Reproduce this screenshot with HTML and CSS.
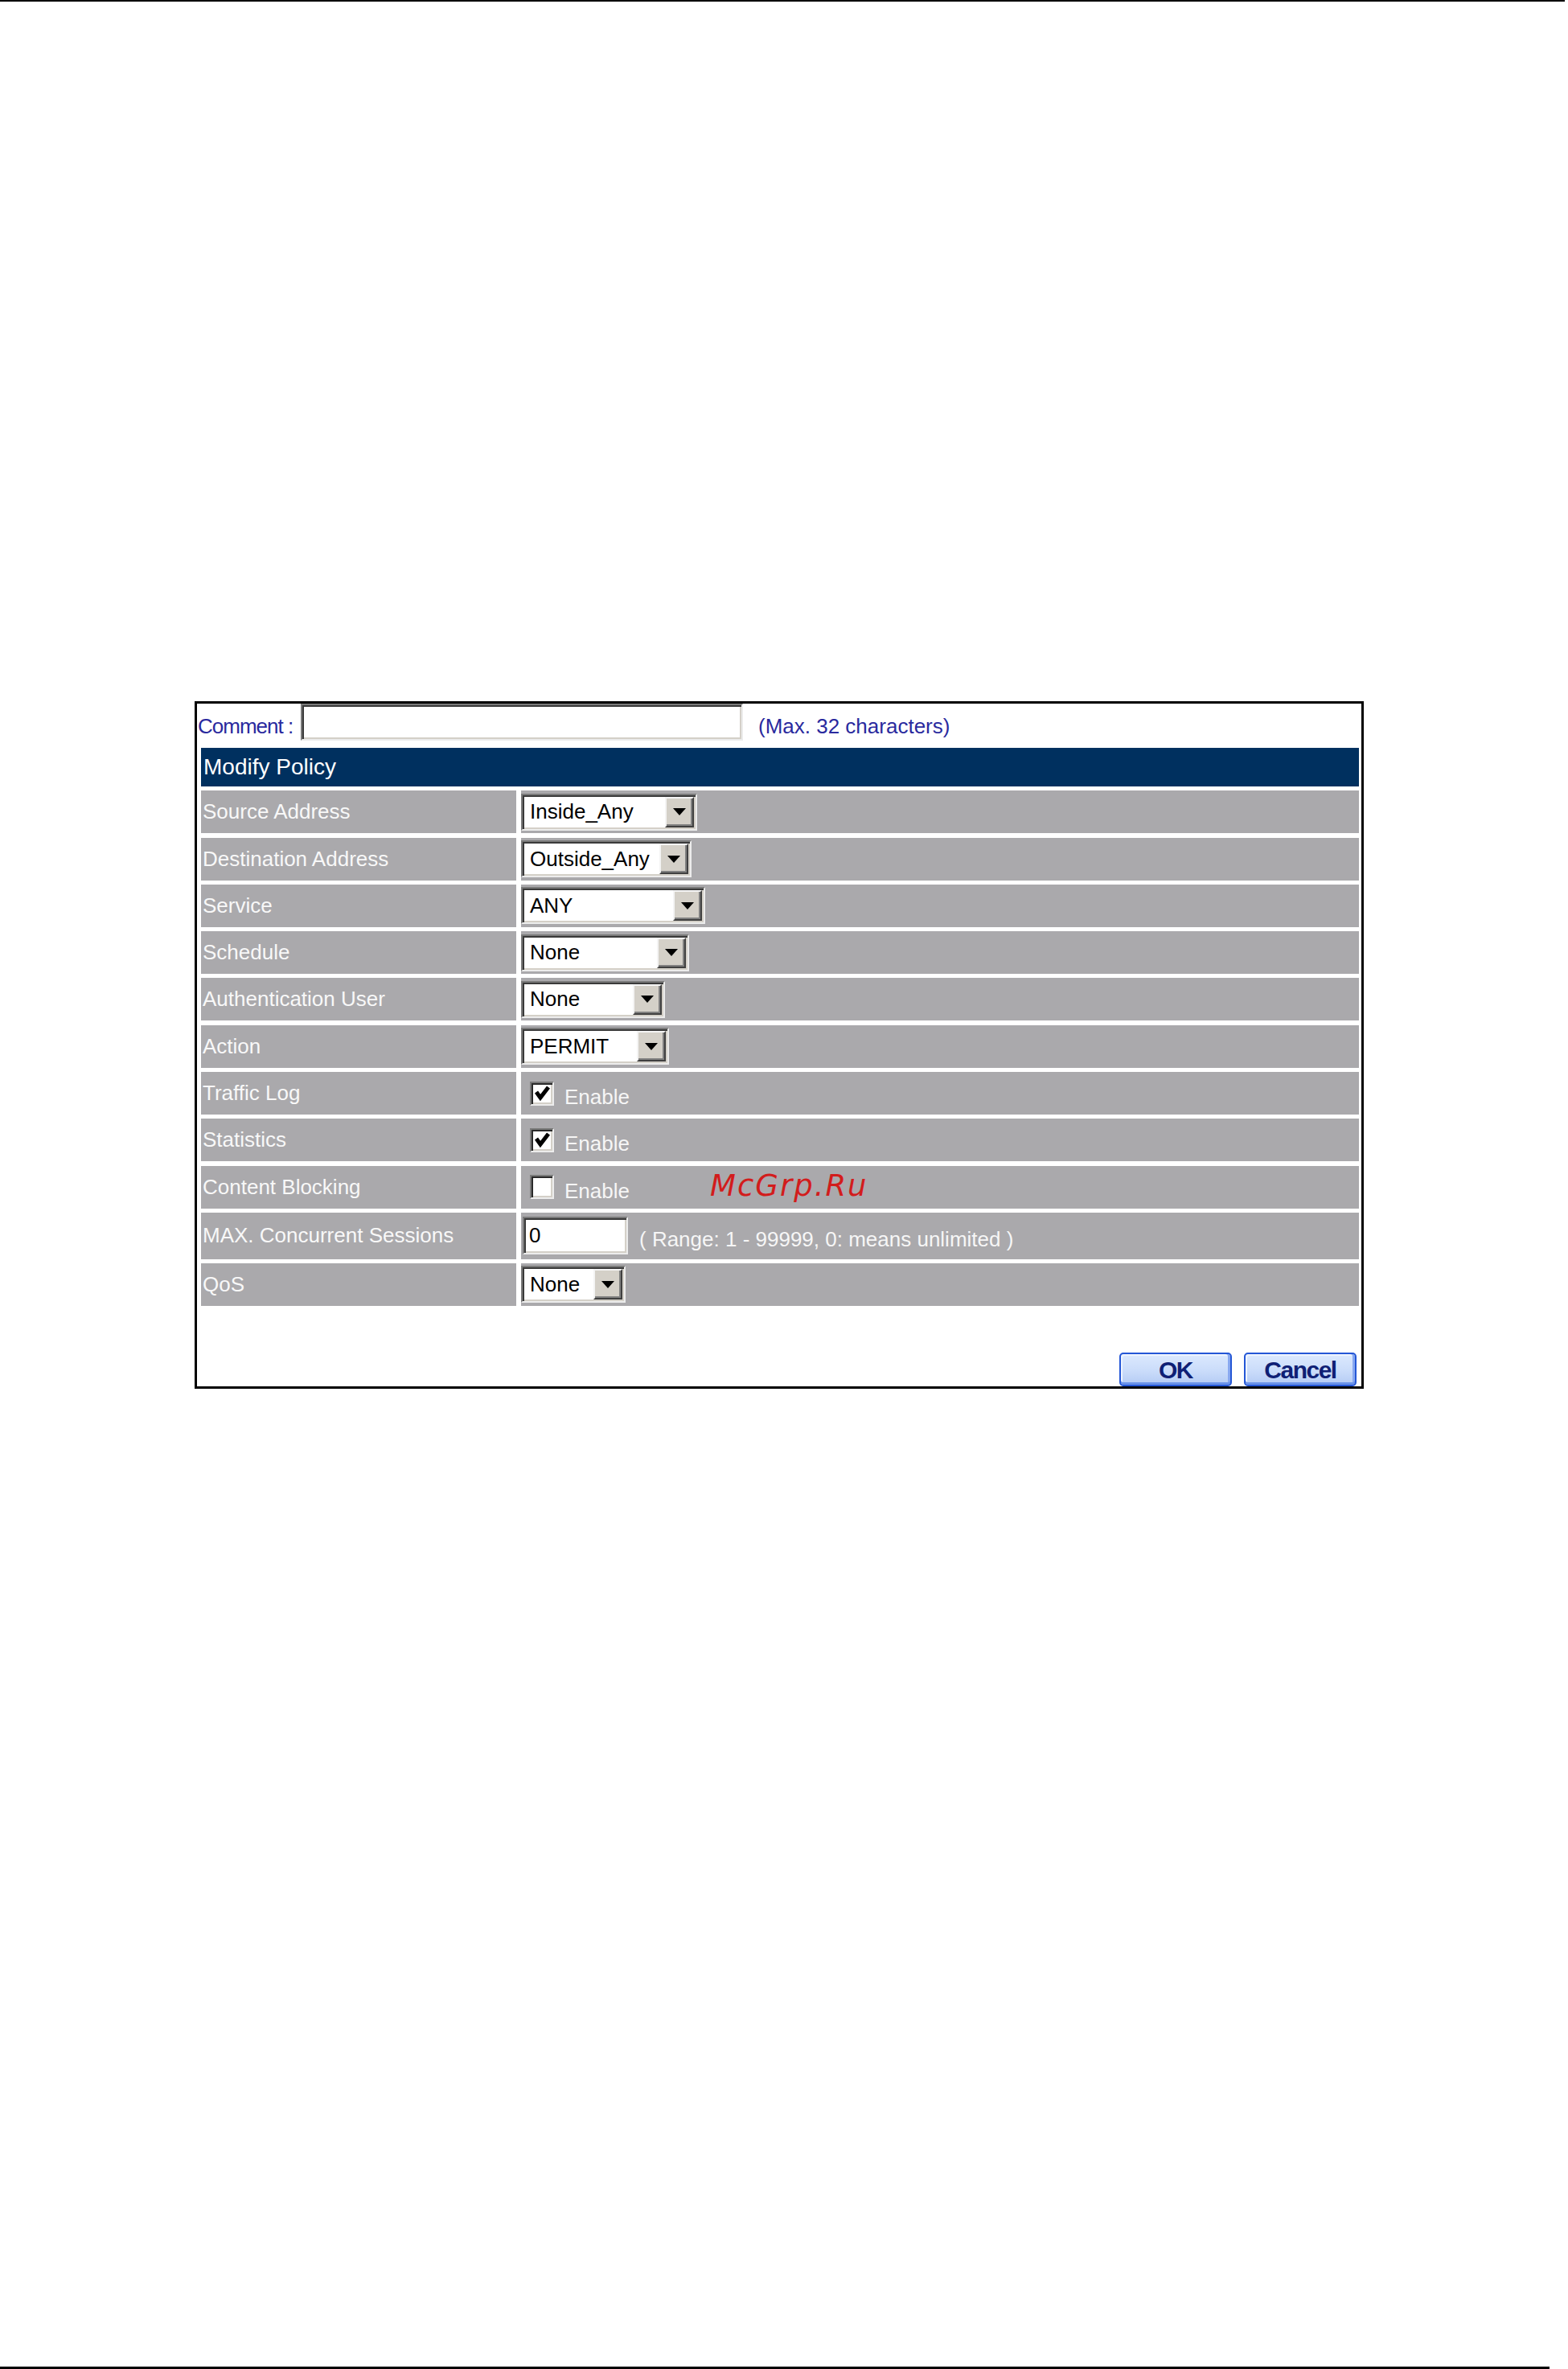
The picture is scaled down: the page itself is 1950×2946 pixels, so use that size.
FILE: index.html
```html
<!DOCTYPE html>
<html>
<head>
<meta charset="utf-8">
<title>Modify Policy</title>
<link rel="stylesheet" href="styles.css">
</head>
<body>
<div class="page">
  <div class="rule-top"></div>
  <div class="panel">
    <div class="comment-row">
      <span class="c-label">Comment :</span>
      <span class="textbox tb-comment"></span>
      <span class="c-note">(Max. 32 characters)</span>
    </div>
    <div class="form">
      <div class="head">Modify Policy</div>

      <div class="lbl">Source Address</div>
      <div class="val"><div class="select w-src"><span class="sel-text">Inside_Any</span><span class="dd"></span></div></div>

      <div class="lbl">Destination Address</div>
      <div class="val"><div class="select w-dst"><span class="sel-text">Outside_Any</span><span class="dd"></span></div></div>

      <div class="lbl">Service</div>
      <div class="val"><div class="select w-svc"><span class="sel-text">ANY</span><span class="dd"></span></div></div>

      <div class="lbl">Schedule</div>
      <div class="val"><div class="select w-sch"><span class="sel-text">None</span><span class="dd"></span></div></div>

      <div class="lbl">Authentication User</div>
      <div class="val"><div class="select w-auth"><span class="sel-text">None</span><span class="dd"></span></div></div>

      <div class="lbl">Action</div>
      <div class="val"><div class="select w-act"><span class="sel-text">PERMIT</span><span class="dd"></span></div></div>

      <div class="lbl">Traffic Log</div>
      <div class="val"><span class="cb"><svg viewBox="0 0 26 26" width="26" height="26"><polyline points="6,11 11,18 21,5" fill="none" stroke="#000" stroke-width="5"/></svg></span><span class="enable">Enable</span></div>

      <div class="lbl">Statistics</div>
      <div class="val"><span class="cb"><svg viewBox="0 0 26 26" width="26" height="26"><polyline points="6,11 11,18 21,5" fill="none" stroke="#000" stroke-width="5"/></svg></span><span class="enable">Enable</span></div>

      <div class="lbl">Content Blocking</div>
      <div class="val"><span class="cb"></span><span class="enable">Enable</span></div>

      <div class="lbl">MAX. Concurrent Sessions</div>
      <div class="val"><span class="textbox tb-max">0</span><span class="range">( Range: 1 - 99999, 0: means unlimited )</span></div>

      <div class="lbl">QoS</div>
      <div class="val"><div class="select w-qos"><span class="sel-text">None</span><span class="dd"></span></div></div>
    </div>
    <div class="btns">
      <div class="btn">OK</div>
      <div class="btn">Cancel</div>
    </div>
    <div class="watermark">McGrp.Ru</div>
  </div>
  <div class="rule-bottom"></div>
</div>
</body>
</html>
```
FILE: styles.css
```css
* { box-sizing: border-box; }
html, body { margin: 0; padding: 0; background: #fff; }
body { font-family: "Liberation Sans", Arial, sans-serif; }

.page {
  display: flex;
  flex-direction: column;
  height: 2946px;
  overflow: hidden;
}
.rule-top {
  flex: none;
  height: 2px;
  width: 1946px;
  background: #000;
}
.rule-bottom {
  flex: none;
  height: 3px;
  width: 1927px;
  margin-top: auto;
  background: #000;
}

.panel {
  position: relative;
  flex: none;
  margin: 870px 0 0 242px;
  width: 1454px;
  border: 3px solid #000;
  background: #fff;
}

.comment-row {
  display: flex;
  align-items: center;
  height: 46px;
  margin: 0 0 9px 1px;
  font-size: 26px;
  color: #2a2a9e;
}
.c-label {
  width: 128px;
  padding-top: 10px;
  letter-spacing: -1px;
  white-space: nowrap;
}
.c-note {
  margin-left: 19px;
  padding-top: 10px;
  white-space: nowrap;
}

.textbox {
  display: block;
  background: #fff;
  border: 2px solid;
  border-color: #7a7a7a #ececec #ececec #7a7a7a;
  box-shadow: inset 2px 2px 0 #3a3a3a, inset -2px -2px 0 #d4d0c8;
}
.tb-comment { width: 550px; height: 46px; }
.tb-max {
  display: flex;
  align-items: center;
  width: 131px;
  height: 47px;
  margin-left: 2px;
  padding-left: 6px;
  color: #000;
  font-size: 26px;
}

.form {
  display: grid;
  grid-template-columns: 392px 1fr;
  grid-template-rows: 48px repeat(9, 53px) 57.7px 53px;
  column-gap: 6px;
  row-gap: 5.3px;
  margin: 0 3px 0 5px;
}
.head {
  grid-column: 1 / -1;
  display: flex;
  align-items: center;
  padding-left: 3px;
  background: #00305f;
  color: #fff;
  font-size: 28px;
}
.lbl {
  display: flex;
  align-items: center;
  padding-left: 2px;
  background: #aaa9ac;
  color: #f8f8f8;
  font-size: 26px;
  white-space: nowrap;
}
.val {
  display: flex;
  align-items: center;
  background: #aaa9ac;
  color: #f6f6f6;
  font-size: 26px;
  white-space: nowrap;
}

.select {
  display: flex;
  height: 46px;
  padding: 2px;
  background: #fff;
  border: 2px solid;
  border-color: #7a7a7a #ececec #ececec #7a7a7a;
  box-shadow: inset 2px 2px 0 #3a3a3a, inset -2px -2px 0 #d4d0c8;
  color: #000;
}
.w-src { width: 219px; }
.w-dst { width: 212px; }
.w-svc { width: 229px; }
.w-sch { width: 209px; }
.w-auth { width: 179px; }
.w-act { width: 184px; }
.w-qos { width: 130px; }

.sel-text {
  flex: 1;
  display: flex;
  align-items: center;
  padding-left: 7px;
  overflow: hidden;
  white-space: nowrap;
  font-size: 26px;
}
.dd {
  flex: none;
  display: flex;
  align-items: center;
  justify-content: center;
  width: 36px;
  background: #d4d0c8;
  border: 2px solid;
  border-color: #f4f4f4 #404040 #404040 #f4f4f4;
  box-shadow: inset -2px -2px 0 #808080;
}
.dd::after {
  content: "";
  display: block;
  border-left: 8px solid transparent;
  border-right: 8px solid transparent;
  border-top: 9px solid #000;
}

.cb {
  display: flex;
  width: 30px;
  height: 30px;
  margin-left: 11px;
  background: #fff;
  border: 2px solid;
  border-color: #7a7a7a #ececec #ececec #7a7a7a;
  box-shadow: inset 2px 2px 0 #2a2a2a, inset -2px -2px 0 #d4d0c8;
}
.enable {
  margin-left: 13px;
  padding-top: 10px;
}
.range {
  margin-left: 14px;
  padding-top: 10px;
}

.btns {
  display: flex;
  justify-content: flex-end;
  gap: 15px;
  margin-top: 58px;
  padding-right: 6px;
}
.btn {
  display: flex;
  align-items: center;
  justify-content: center;
  width: 140px;
  height: 42px;
  padding-top: 3px;
  border: 2px solid #2457d6;
  border-radius: 5px;
  background: linear-gradient(#dce9fe, #cadcfa 55%, #b4cbf4);
  box-shadow: inset 0 -3px 0 #6b93ea, inset -3px 0 0 #88a8f0, inset 2px 2px 0 #eef4ff;
  color: #0f1f75;
  font-weight: bold;
  font-size: 30px;
  letter-spacing: -1.5px;
}

.watermark {
  position: absolute;
  left: 638px;
  top: 578px;
  font-family: "DejaVu Sans", sans-serif;
  font-style: italic;
  font-size: 37px;
  letter-spacing: 2px;
  color: #d21c1c;
  white-space: nowrap;
}
```
